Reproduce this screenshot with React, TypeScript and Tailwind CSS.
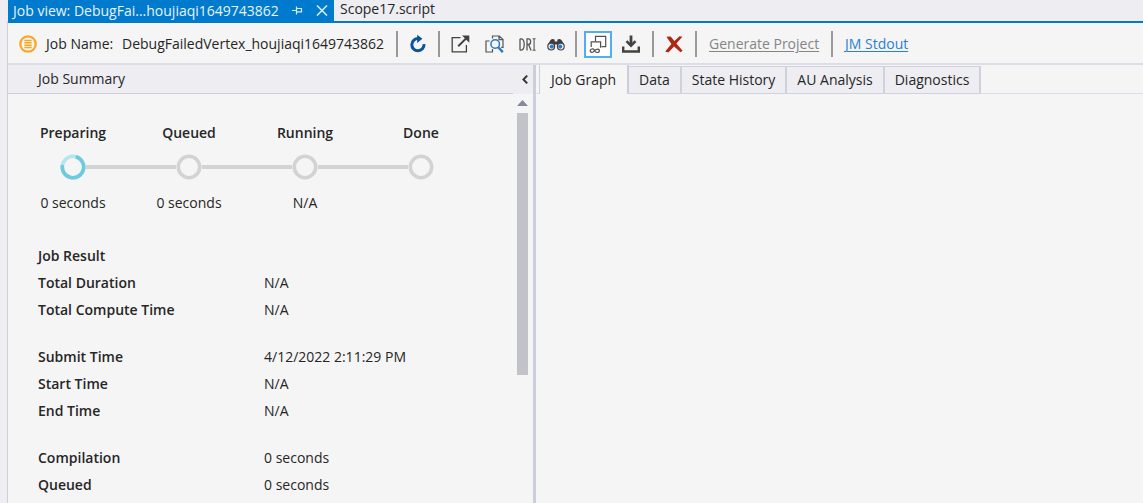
import type { ReactNode } from "react";

const steps = [
  { name: "Preparing", time: "0 seconds", active: true },
  { name: "Queued", time: "0 seconds", active: false },
  { name: "Running", time: "N/A", active: false },
  { name: "Done", time: "", active: false },
];

const groups: { label: string; value: string }[][] = [
  [
    { label: "Job Result", value: "" },
    { label: "Total Duration", value: "N/A" },
    { label: "Total Compute Time", value: "N/A" },
  ],
  [
    { label: "Submit Time", value: "4/12/2022 2:11:29 PM" },
    { label: "Start Time", value: "N/A" },
    { label: "End Time", value: "N/A" },
  ],
  [
    { label: "Compilation", value: "0 seconds" },
    { label: "Queued", value: "0 seconds" },
  ],
];

const graphTabs = ["Data", "State History", "AU Analysis", "Diagnostics"];

function Divider() {
  return <span className="h-[26px] w-[2px] shrink-0 bg-[#999999]" />;
}

function IconButton({ label, className, children }: { label: string; className: string; children: ReactNode }) {
  return (
    <button type="button" aria-label={label} className={`flex shrink-0 items-center justify-center ${className}`}>
      {children}
    </button>
  );
}

function StatusIcon() {
  return (
    <svg width="18" height="18" viewBox="0 0 18 18" className="shrink-0">
      <circle cx="9" cy="9" r="7.7" fill="none" stroke="#f9a825" strokeWidth="2.3" />
      <path d="M5.3 5.4h7.4M5.3 7.8h7.4M5.3 10.2h7.4M5.3 12.6h7.4" stroke="#f9a825" strokeWidth="1.5" />
    </svg>
  );
}

function PinIcon() {
  return (
    <svg width="11" height="9" viewBox="0 0 11 9" fill="none" stroke="#d5eafa">
      <path d="M0 4.5h4M4.5 0.5v8M4.5 2.5h5v4M4.5 5.8h5.5" strokeWidth="1.2" />
    </svg>
  );
}

function CloseIcon() {
  return (
    <svg width="12" height="11" viewBox="0 0 12 11" fill="none" stroke="#d5eafa" strokeWidth="1.6">
      <path d="M1 0.5l10 10M11 0.5l-10 10" />
    </svg>
  );
}

function RefreshIcon() {
  return (
    <svg width="18" height="20" viewBox="0 0 18 20">
      <path d="M9.5 4.6A6.1 6.1 0 1 0 15 10.2" fill="none" stroke="#0c539c" strokeWidth="3" />
      <path d="M8.2 0.8l5.2 4-5.2 4.2z" fill="#0c539c" />
    </svg>
  );
}

function OpenIcon() {
  return (
    <svg width="19" height="18" viewBox="0 0 19 18" fill="none" stroke="#424242" strokeWidth="1.3">
      <path d="M9.5 2.6H1.2v14.2h14.2V10" />
      <path d="M7.2 11.2L15.5 3" strokeWidth="1.9" />
      <path d="M11 0.5h7.3v7.2z" fill="#424242" stroke="none" />
    </svg>
  );
}

function SearchDocsIcon() {
  return (
    <svg width="19" height="18" viewBox="0 0 19 18" fill="none" stroke="#555555" strokeWidth="1.2">
      <path d="M4.6 6H1v11h6.5V14" />
      <path d="M7.5 3.5V1h6.8L18 4.4v8h-1.8M14 1v3.6h4" />
      <circle cx="10.2" cy="9" r="4.3" fill="#f5f5f5" stroke="#2b78c5" strokeWidth="1.5" />
      <path d="M13.2 12.2l4.6 4.9" stroke="#2b78c5" strokeWidth="2.4" />
    </svg>
  );
}

function DriIcon() {
  return (
    <svg width="17" height="13" viewBox="0 0 17 13" fill="none" stroke="#565656" strokeWidth="1.3">
      <path d="M1 0.7v11.6M1 0.9h1.3q2.9 0.3 2.9 5.6t-2.9 5.6H1" />
      <path d="M8 12.6V0.9h1.6q2 0.2 2 2.8t-2 2.8H8M9.6 6.5l2.5 6" />
      <path d="M13.6 0.8h3M15.1 0.8v11.4M13.6 12.2h3" strokeWidth="1.1" />
    </svg>
  );
}

function BinocularsIcon() {
  return (
    <svg width="18" height="13" viewBox="0 0 18 13">
      <path d="M3.4 2.2q2-2 4.3-0.5v1.7h2.6V1.7q2.3-1.5 4.3 0.5l2.6 4.4-3.6 1.6H10.4V6.5H7.6v1.7H1l-0.2-1.6z" fill="#3d3d3d" />
      <circle cx="4.2" cy="8.6" r="3.4" fill="#f5f5f5" stroke="#444444" strokeWidth="1.2" />
      <circle cx="13.8" cy="8.6" r="3.4" fill="#f5f5f5" stroke="#444444" strokeWidth="1.2" />
      <circle cx="4.8" cy="8.6" r="2.1" fill="#2f78c4" />
      <circle cx="13.2" cy="8.6" r="2.1" fill="#2f78c4" />
    </svg>
  );
}

function LinkedWindowsIcon() {
  return (
    <svg width="18" height="19" viewBox="0 0 18 19" fill="none" stroke="#505050" strokeWidth="1.2">
      <path d="M6.5 6.2V1.4h10.2v10.2h-4.2" />
      <path d="M2.2 12V6.8h9.4v6" />
      <path d="M5.5 15.2q-1-1.4-2.7-1.2-1.9 0.5-1.5 2.3 1.1 1.7 2.8 0.7l3-2.4q2-1.3 3.2 0.3 0.4 2.2-1.6 2.6-1.7 0.1-2.7-1.1" strokeWidth="1.2" />
    </svg>
  );
}

function DownloadIcon() {
  return (
    <svg width="18" height="18" viewBox="0 0 18 18" fill="none" stroke="#424242">
      <path d="M1.2 11.5v5h15.6v-5" strokeWidth="2.4" />
      <path d="M9 0.5v9" strokeWidth="2.8" />
      <path d="M4.5 6.2L9 10.7l4.5-4.5" strokeWidth="2.6" />
    </svg>
  );
}

function CancelIcon() {
  return (
    <svg width="18" height="17" viewBox="0 0 18 17" fill="#aa2a13">
      <path d="M1.4 0.8L5.6 0.5 9.4 5 14.6 0.3 17.4 0.8 11.4 7.4 17.6 14.8 15.6 16.2 9 10.4 3.4 16.4 0.2 15.6 6.4 8z" />
    </svg>
  );
}

function StepCircle({ active }: { active: boolean }) {
  return (
    <svg width="26" height="26" viewBox="0 0 26 26" className="shrink-0">
      <circle cx="13" cy="13" r="10.7" fill="none" stroke={active ? "#b5e5ee" : "#d3d3d3"} strokeWidth="3.6" />
      {active && <path d="M15.8 2.7A10.7 10.7 0 1 1 2.5 11" fill="none" stroke="#6ccbdc" strokeWidth="3.6" />}
    </svg>
  );
}

export default function App() {
  return (
    <div className="flex h-screen flex-col overflow-hidden bg-[#ededf2] pl-[7px] font-['Open_Sans',sans-serif] text-sm leading-5 text-[#262626]">
      <nav aria-label="Open documents" className="flex h-[21px] shrink-0 pl-px">
        <div className="flex items-center bg-[#007acc] pr-[6px] pl-[5px] text-[#e8f4fc]">
          <a href="#job" className="w-[267px] whitespace-nowrap">Job view: DebugFai...houjiaqi1649743862</a>
          <button type="button" aria-label="Pin tab" className="mr-[13px] ml-[12px]"><PinIcon /></button>
          <button type="button" aria-label="Close tab"><CloseIcon /></button>
        </div>
        <a href="#script" className="px-[6px] leading-[18px] text-[#262626]">Scope17.script</a>
      </nav>

      <div className="flex min-h-0 flex-1 flex-col border-l border-[#cccedb] bg-[#f5f5f5]">
        <header className="flex h-[44px] shrink-0 items-center border-t-2 border-b-2 border-t-[#007acc] border-b-[#dcdde6] pt-[2px] pl-[11px] whitespace-nowrap">
          <StatusIcon />
          <span className="ml-[9px] w-[76px]">Job Name:</span>
          <span className="w-[274px]">DebugFailedVertex_houjiaqi1649743862</span>
          <Divider />
          <IconButton label="Refresh" className="mx-[11px] w-[18px]"><RefreshIcon /></IconButton>
          <Divider />
          <IconButton label="Open in browser" className="ml-[10px] w-[20px]"><OpenIcon /></IconButton>
          <IconButton label="Find in files" className="ml-[14px] w-[20px]"><SearchDocsIcon /></IconButton>
          <IconButton label="DRI" className="ml-[14px] w-[18px]"><DriIcon /></IconButton>
          <IconButton label="Find" className="mr-[10px] ml-[11px] w-[18px]"><BinocularsIcon /></IconButton>
          <Divider />
          <IconButton label="Linked view" className="ml-[7px] h-[27px] w-[28px] border-2 border-[#50b0ef] bg-white"><LinkedWindowsIcon /></IconButton>
          <IconButton label="Download" className="mr-[12px] ml-[10px] w-[18px]"><DownloadIcon /></IconButton>
          <Divider />
          <IconButton label="Cancel job" className="mr-[12px] ml-[11px] w-[18px]"><CancelIcon /></IconButton>
          <Divider />
          <a href="#generate" className="ml-[12px] w-[122px] text-[#858585] underline underline-offset-2">Generate Project</a>
          <Divider />
          <a href="#stdout" className="ml-[12px] text-[#2b7fd3] underline underline-offset-2">JM Stdout</a>
        </header>

        <main className="flex min-h-0 flex-1">
          <section className="flex w-[46%] min-w-[525px] shrink-0 flex-col border-r-[3px] border-[#cccedb] lg:w-[528px]">
            <div className="flex h-[29px] shrink-0 bg-[#ededf2]">
              <h2 className="flex flex-1 items-center border-b border-[#cccedb] pl-[30px]">Job Summary</h2>
              <button type="button" aria-label="Collapse summary" className="flex w-[20px] items-center justify-center pl-[3px]">
                <svg width="6" height="9" viewBox="0 0 6 9" fill="none" stroke="#333333" strokeWidth="1.9"><path d="M5.2 0.6L1.4 4.5l3.8 3.9" /></svg>
              </button>
            </div>

            <div className="flex min-h-0 flex-1">
              <div className="min-w-0 flex-1 overflow-hidden pt-[29px]">
                <ol className="flex pl-[7px]">
                  {steps.map((step, i) => (
                    <li key={step.name} className="flex w-[116px] flex-col items-center">
                      <span className="font-semibold">{step.name}</span>
                      <span className="mt-[11px] mb-[13px] flex w-full items-center">
                        <span className={`h-[4px] flex-1 ${i > 0 ? "bg-[#d3d3d3]" : ""}`} />
                        <StepCircle active={step.active} />
                        <span className={`h-[4px] flex-1 ${i < steps.length - 1 ? "bg-[#d3d3d3]" : ""}`} />
                      </span>
                      <span className="h-[20px]">{step.time}</span>
                    </li>
                  ))}
                </ol>
                <div className="flex flex-col gap-[20px] pt-[29px] pl-[30px]">
                  {groups.map((rows) => (
                    <dl key={rows[0].label}>
                      {rows.map((row) => (
                        <div key={row.label} className="flex h-[27px] items-center whitespace-nowrap">
                          <dt className="w-[226px] font-semibold">{row.label}</dt>
                          <dd>{row.value}</dd>
                        </div>
                      ))}
                    </dl>
                  ))}
                </div>
              </div>
              <div className="flex w-[20px] shrink-0 flex-col items-center pt-[6px] pr-px">
                <svg width="11" height="6" viewBox="0 0 11 6" fill="#868999"><path d="M5.5 0L11 6H0z" /></svg>
                <div className="mt-[7px] h-[262px] w-[11px] bg-[#c2c3c9]" />
              </div>
            </div>
          </section>

          <section className="flex min-w-0 flex-1 flex-col">
            <div role="tablist" className="flex h-[29px] shrink-0 whitespace-nowrap">
              <span className="w-[3px] border-b border-[#dcdde6]" />
              <button type="button" role="tab" aria-selected="true" className="w-[90px] border-r-2 border-l border-[#cccedb] pt-px">Job Graph</button>
              {graphTabs.map((tab) => (
                <button key={tab} type="button" role="tab" aria-selected="false" className="mt-px border-t border-r-2 border-b border-[#cfd1dd] bg-[#ededf2] px-[10px]">{tab}</button>
              ))}
              <span className="flex-1 border-b border-[#dcdde6]" />
            </div>
          </section>
        </main>
      </div>
    </div>
  );
}
